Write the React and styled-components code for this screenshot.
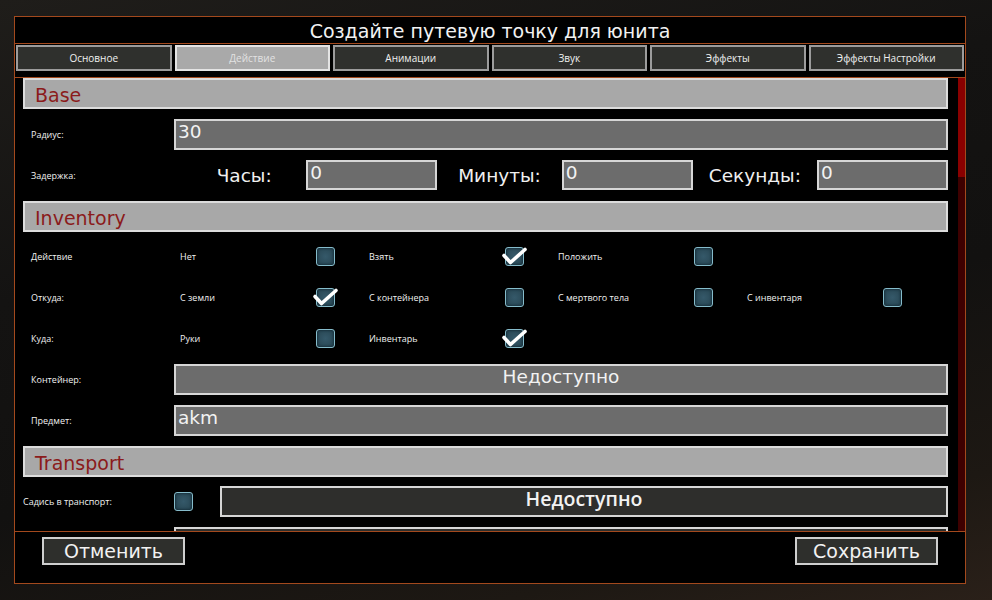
import React from 'react';
import styled, { createGlobalStyle } from 'styled-components';

const GlobalStyle = createGlobalStyle`
    html, body {
        margin: 0;
        padding: 0;
        width: 992px;
        height: 600px;
        overflow: hidden;
        font-family: "Open Sans", "Noto Sans", sans-serif;
        background: linear-gradient(165deg, #1f1d1a 0%, #141312 35%, #121110 60%, #1d1813 85%, #2a2019 100%);
        color: #fff;
    }
`;

const ORANGE = '#a3491d';
const BIG = '"DejaVu Sans", "Open Sans", sans-serif';

const tabs = ['Основное', 'Действие', 'Анимации', 'Звук', 'Эффекты', 'Эффекты Настройки'];

const Check = ({ checked }) => (
    <CheckBox>
        {checked && (
            <svg width="28" height="24" viewBox="-4 -4 28 24">
                <path d="M-1 8.5 L5.5 15.5 L20 2.5" fill="none" stroke="#fff" strokeWidth="3.6" strokeLinecap="round" strokeLinejoin="round" />
            </svg>
        )}
    </CheckBox>
);

const CheckCell = ({ label, checked }) => (
    <Cell>
        <CellLabel>{label}</CellLabel>
        <Check checked={checked} />
    </Cell>
);

const App = () => {
    return (
        <>
            <GlobalStyle />
            <Window>
                <TitleBar>Создайте путевую точку для юнита</TitleBar>
                <TabBar>
                    {tabs.map((t) => (
                        <Tab key={t} $active={t === 'Действие'}>{t}</Tab>
                    ))}
                </TabBar>
                <Body>
                    <List>
                        <Header>Base</Header>
                        <Row>
                            <Label>Радиус:</Label>
                            <Field>30</Field>
                        </Row>
                        <Row>
                            <Label $wide>Задержка:</Label>
                            <TimeGroup>
                                <TimeLabel>Часы:</TimeLabel>
                                <Field $small>0</Field>
                            </TimeGroup>
                            <TimeGroup>
                                <TimeLabel>Минуты:</TimeLabel>
                                <Field $small>0</Field>
                            </TimeGroup>
                            <TimeGroup>
                                <TimeLabel>Секунды:</TimeLabel>
                                <Field $small>0</Field>
                            </TimeGroup>
                        </Row>
                        <Header>Inventory</Header>
                        <Row>
                            <Label>Действие</Label>
                            <CheckCell label="Нет" />
                            <CheckCell label="Взять" checked />
                            <CheckCell label="Положить" />
                        </Row>
                        <Row>
                            <Label>Откуда:</Label>
                            <CheckCell label="С земли" checked />
                            <CheckCell label="С контейнера" />
                            <CheckCell label="С мертвого тела" />
                            <CheckCell label="С инвентаря" />
                        </Row>
                        <Row>
                            <Label>Куда:</Label>
                            <CheckCell label="Руки" />
                            <CheckCell label="Инвентарь" checked />
                        </Row>
                        <Row>
                            <Label>Контейнер:</Label>
                            <Field $center>Недоступно</Field>
                        </Row>
                        <Row>
                            <Label>Предмет:</Label>
                            <Field>akm</Field>
                        </Row>
                        <Header>Transport</Header>
                        <Row>
                            <Label $flush>Садись в транспорт:</Label>
                            <Check />
                            <Field $dark $indent $center>Недоступно</Field>
                        </Row>
                        <Row>
                            <Label />
                            <Field $dark />
                        </Row>
                    </List>
                    <ScrollTrack>
                        <ScrollThumb />
                    </ScrollTrack>
                </Body>
                <Footer>
                    <Button>Отменить</Button>
                    <Button>Сохранить</Button>
                </Footer>
            </Window>
        </>
    );
};

export default App;

const Window = styled.div`
    margin: 16px 0 0 14px;
    width: 950px;
    height: 566px;
    border: 1px solid ${ORANGE};
    background: #000;
    display: flex;
    flex-direction: column;
`;

const TitleBar = styled.div`
    height: 26px;
    line-height: 28px;
    text-align: center;
    font-family: ${BIG};
    font-size: 19px;
    color: #f2f2f2;
    border-bottom: 1px solid ${ORANGE};
`;

const TabBar = styled.div`
    display: flex;
    gap: 3px;
    height: 26px;
    padding: 1px 1px 6px 1px;
    border-bottom: 1px solid ${ORANGE};
`;

const Tab = styled.div`
    flex: 1;
    box-sizing: border-box;
    height: 26px;
    line-height: 22px;
    text-align: center;
    font-size: 10px;
    color: ${(p) => (p.$active ? '#e2e2e2' : '#f0f0f0')};
    background: ${(p) => (p.$active ? '#a9a9a9' : '#2f302d')};
    border: 2px solid ${(p) => (p.$active ? '#e4e4e4' : '#9c9c9c')};
`;

const Body = styled.div`
    height: 453px;
    display: flex;
    overflow: hidden;
`;

const List = styled.div`
    flex: 1;
    display: flex;
    flex-direction: column;
    gap: 9.85px;
    padding: 0 10px 0 8px;
    overflow: hidden;
`;

const ScrollTrack = styled.div`
    width: 7px;
    background: #3e0000;
    display: flex;
    flex-direction: column;
`;

const ScrollThumb = styled.div`
    height: 99px;
    background: #8a0000;
`;

const Header = styled.div`
    flex: none;
    box-sizing: border-box;
    height: 31px;
    line-height: 30px;
    padding-left: 10px;
    font-family: ${BIG};
    font-size: 19px;
    color: #8b1b1b;
    background: #a8a8a8;
    border: 2px solid #dcdcdc;
`;

const Row = styled.div`
    flex: none;
    height: 31px;
    display: flex;
    align-items: center;
`;

const Label = styled.div`
    flex: none;
    box-sizing: border-box;
    width: ${(p) => (p.$wide ? 159 : 151)}px;
    padding-left: ${(p) => (p.$flush ? 0 : 8)}px;
    font-size: 9px;
    color: #f0f0f0;
    white-space: nowrap;
`;

const Field = styled.div`
    box-sizing: border-box;
    flex: ${(p) => (p.$small ? 'none' : 1)};
    width: ${(p) => (p.$small ? '131px' : 'auto')};
    height: ${(p) => (p.$small ? 30 : 31)}px;
    margin-left: ${(p) => (p.$indent ? 27 : 0)}px;
    padding: 0 2px;
    line-height: 22px;
    font-family: ${(p) => (p.$dark ? '"Open Sans", sans-serif' : BIG)};
    font-size: ${(p) => (p.$dark ? 19.5 : 18.5)}px;
    font-weight: ${(p) => (p.$dark ? 600 : 400)};
    text-align: ${(p) => (p.$center ? 'center' : 'left')};
    color: #f2f2f2;
    background: ${(p) => (p.$dark ? '#2e2e2c' : '#6c6c6c')};
    border: 2px solid #d6d6d6;
    white-space: nowrap;
`;

const TimeGroup = styled.div`
    flex: 1;
    display: flex;
    align-items: center;
`;

const TimeLabel = styled.div`
    flex: 1;
    text-align: center;
    font-family: ${BIG};
    font-size: 18.5px;
    color: #f0f0f0;
`;

const Cell = styled.div`
    flex: none;
    width: 189px;
    display: flex;
    align-items: center;
`;

const CellLabel = styled.div`
    width: 142px;
    box-sizing: border-box;
    padding-left: 6px;
    font-size: 9px;
    color: #f0f0f0;
    white-space: nowrap;
`;

const CheckBox = styled.div`
    position: relative;
    flex: none;
    box-sizing: border-box;
    width: 19px;
    height: 19px;
    border-radius: 3px;
    border: 1.5px solid #86bccb;
    background: radial-gradient(circle at 50% 50%, #35596a 0%, #2c4c5a 60%, #23404c 100%);
    box-shadow: inset 0 0 2px 1px #1a3440;

    svg {
        position: absolute;
        left: -5px;
        top: -5px;
    }
`;

const Footer = styled.div`
    flex: 1;
    display: flex;
    justify-content: space-between;
    align-items: flex-start;
    padding: 5px 27px 0 27px;
    border-top: 1px solid ${ORANGE};
`;

const Button = styled.div`
    box-sizing: border-box;
    width: 143px;
    height: 28px;
    line-height: 24px;
    text-align: center;
    font-family: ${BIG};
    font-size: 19px;
    color: #f2f2f2;
    background: #2e2f2c;
    border: 2px solid #cfcfcf;
`;
